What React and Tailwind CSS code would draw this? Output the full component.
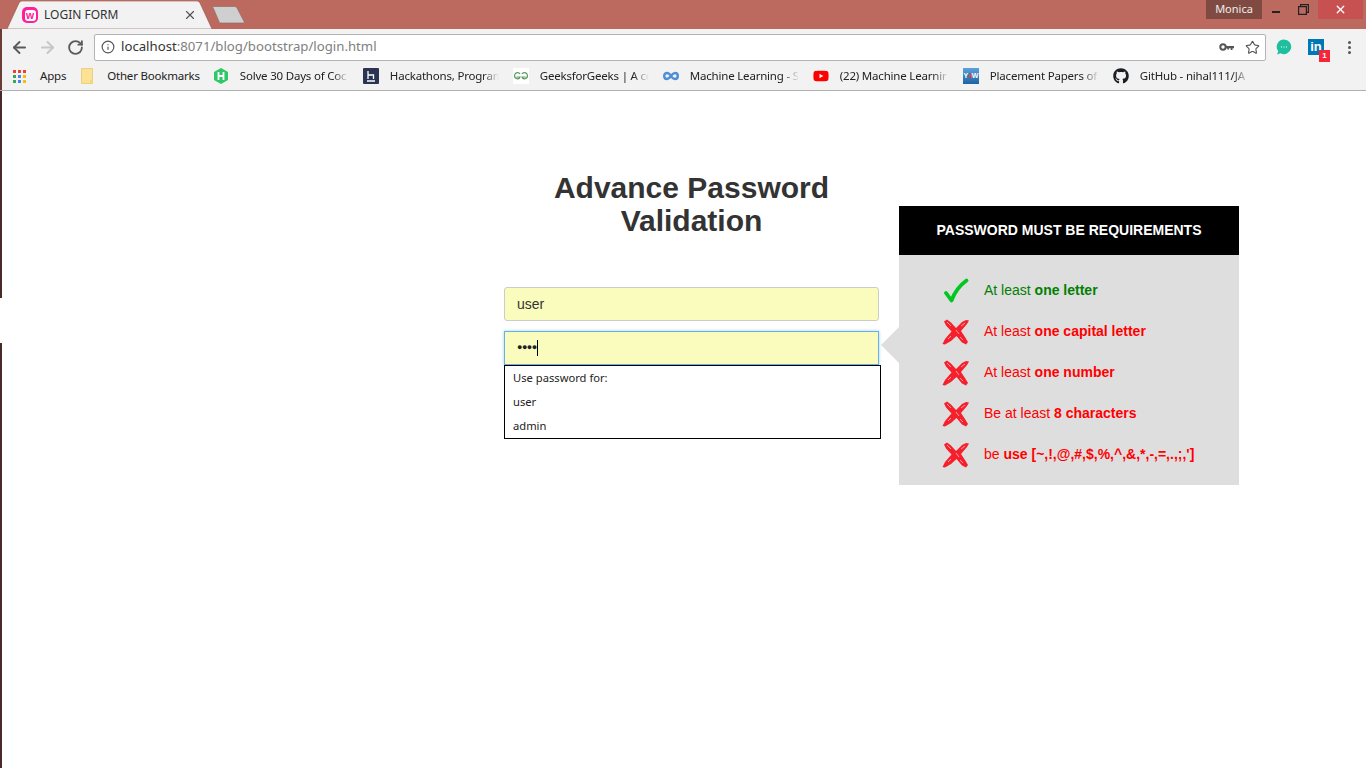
import { ArrowLeft, ArrowRight, RotateCw, Info, Star, X } from "lucide-react";
import { FaGithub, FaYoutube } from "react-icons/fa";

const uiFont = "font-['Noto_Sans',sans-serif]";

function AppsIcon() {
  const colors = ["#ea4335", "#ea4335", "#ea4335", "#34a853", "#4285f4", "#fbbc05", "#34a853", "#4285f4", "#fbbc05"];
  return (
    <div className="grid grid-cols-3 gap-[2px] w-[13px] h-[13px] shrink-0">
      {colors.map((c, i) => (
        <span key={i} className="w-[3px] h-[3px]" style={{ backgroundColor: c }} />
      ))}
    </div>
  );
}

function FolderIcon() {
  return (
    <svg width="12" height="16" viewBox="0 0 12 16" className="shrink-0">
      <path d="M.5.5h11v15H.5z" fill="#fde293" stroke="#e9cf86" />
      <path d="M9 12h3v3.500H9z" fill="#f4d675" />
    </svg>
  );
}

function HackerRankIcon() {
  return (
    <svg width="16" height="16" viewBox="0 0 16 16">
      <path d="M8 0l7 4v8l-7 4-7-4V4z" fill="#2ec866" />
      <path d="M5.500 4v8M10.500 4v8M5.500 8h5" stroke="#fff" strokeWidth="1.800" />
    </svg>
  );
}

function HackerEarthIcon() {
  return (
    <svg width="16" height="16" viewBox="0 0 16 16">
      <rect width="16" height="16" rx="1" fill="#2c3454" />
      <path d="M5 3v8M5 7h5.500v4M4 13h8" stroke="#fff" strokeWidth="1.300" fill="none" />
    </svg>
  );
}

function GfgIcon() {
  return (
    <div className="w-4 h-4 bg-white flex items-center justify-center shrink-0">
      <svg width="16" height="10" viewBox="0 0 16 10" fill="none" stroke="#5a9a5e" strokeWidth="1.200">
        <path d="M7 3C6 1 2 1 1.500 4.500 1.500 8 6 9 7 6H3.500" />
        <path d="M9 3c1-2 5-2 5.500 1.500C14.500 8 10 9 9 6h3.500" />
      </svg>
    </div>
  );
}

function InfinityIcon() {
  return (
    <svg width="16" height="16" viewBox="0 0 16 16" fill="none" stroke="#4a8fd8" strokeWidth="2.400">
      <path d="M8 8C6.500 5.500 5.500 5 4 5 2.300 5 1.200 6.300 1.200 8S2.300 11 4 11C6 11 7 9.500 8 8 9 6.500 10 5 12 5 13.700 5 14.800 6.300 14.800 8S13.700 11 12 11C10.500 11 9.500 10.500 8 8Z" />
    </svg>
  );
}

function YwIcon() {
  return (
    <div className="w-4 h-4 bg-gradient-to-b from-[#5aa2dc] to-[#1f63a3] flex items-center justify-center shrink-0 font-['Liberation_Sans',sans-serif] text-[7px] font-bold text-white">
      Y<span className="text-[#e8403a]">4</span>W
    </div>
  );
}

const bookmarks = [
  { icon: <HackerRankIcon />, label: "Solve 30 Days of Coc" },
  { icon: <HackerEarthIcon />, label: "Hackathons, Program" },
  { icon: <GfgIcon />, label: "GeeksforGeeks | A cc" },
  { icon: <InfinityIcon />, label: "Machine Learning - S" },
  { icon: <FaYoutube size={16} color="#f00" />, label: "(22) Machine Learnir" },
  { icon: <YwIcon />, label: "Placement Papers of" },
  { icon: <FaGithub size={16} color="#1b1f23" />, label: "GitHub - nihal111/JA" },
];

function Bookmark({ icon, label }) {
  return (
    <div className="flex items-center w-[150px] shrink-0">
      <div className="w-4 flex justify-center shrink-0">{icon}</div>
      <span className="ml-[11px] w-[109px] whitespace-nowrap [mask-image:linear-gradient(to_right,black_85%,transparent)]">
        {label}
      </span>
    </div>
  );
}

function TabBar() {
  return (
    <div className="h-[29px] bg-[#bc6a5f] flex relative shrink-0">
      <div className="relative w-[205px] ml-[7px] h-[28px] mt-[1px] shrink-0">
        <svg width="205" height="28" viewBox="0 0 205 28" className="absolute inset-0">
          <path d="M0 28L12 2Q13 0 15 0H190Q192 0 193 2L205 28Z" fill="#f2f2f2" stroke="#8f534a" strokeWidth=".6" />
        </svg>
        <div className={`relative flex items-center h-full pl-[15px] pr-[15px] text-xs text-[#333] ${uiFont}`}>
          <div className="w-4 h-4 rounded-[5px] bg-[#ff1f9c] flex items-center justify-center shrink-0">
            <div className="w-[11px] h-[11px] rounded-[3px] bg-white text-[#ff1f9c] text-[10px] leading-[10px] font-bold text-center">w</div>
          </div>
          <span className="ml-[6px] flex-1">LOGIN FORM</span>
          <X size={14} strokeWidth={2} className="text-[#555]" />
        </div>
      </div>
      <svg width="36" height="18" viewBox="0 0 36 18" className="mt-[6px] ml-[-1px]">
        <path d="M2 1.500C1 1 1.500 .5 3 .5H23C25 .5 25.500 1 26 2L33 15.500C33.500 16.500 33 17 32 17H10C9 17 8.500 16.500 8 15.500Z" fill="#cfcfcf" stroke="#8f6f69" strokeWidth=".7" />
      </svg>

      <div className="ml-auto flex items-start">
        <div className={`h-[19px] w-[56px] bg-[#7f4a42] text-white/90 text-[11px] leading-[18px] text-center ${uiFont}`}>Monica</div>
        <div className="w-[27px] h-[19px] ml-[1px] flex items-center justify-center">
          <span className="w-2 h-[2px] mt-[5px] ml-[-1px] bg-[#222]" />
        </div>
        <div className="w-[27px] h-[19px] flex items-center justify-center">
          <svg width="11" height="11" viewBox="0 0 11 11" fill="none" stroke="#222" strokeWidth="1.200">
            <path d="M.6 2.600h7.800v7.800H.6zM2.600 2.600V.6h7.800v7.800H8.400" />
          </svg>
        </div>
        <div className="w-[45px] h-[19px] ml-[1px] mr-[3px] bg-[#c75050] flex items-center justify-center">
          <X size={13} strokeWidth={2.500} color="#fff" />
        </div>
      </div>
    </div>
  );
}

function Toolbar() {
  return (
    <div className="h-[33px] pt-[3px] bg-[#f2f2f2] shadow-[inset_2px_0_0_#6b3b35] flex items-center shrink-0">
      <ArrowLeft size={19} strokeWidth={2.400} className="ml-[10px] text-[#5a5a5a]" />
      <ArrowRight size={19} strokeWidth={2.400} className="ml-[9px] text-[#c6c6c6]" />
      <RotateCw size={17} strokeWidth={2.600} className="ml-[10px] text-[#5a5a5a]" />
      <div className="ml-[10px] w-[1172px] h-[27px] bg-white border border-[#b4b4b4] rounded-[2px] flex items-center">
        <Info size={14} strokeWidth={2} className="ml-[6px] text-[#555]" />
        <span className={`ml-[6px] text-[13.200px] text-[#333] ${uiFont}`}>
          localhost<span className="text-[#808080]">:8071/blog/bootstrap/login.html</span>
        </span>
        <svg width="15" height="8" viewBox="0 0 15 8" className="ml-auto">
          <circle cx="4" cy="4" r="2.700" fill="none" stroke="#555" strokeWidth="2" />
          <path d="M6 3h9v2.200h-1.500V7h-1.800V5.200H10V6.500H8.300V5.200H6z" fill="#555" />
        </svg>
        <Star size={15} strokeWidth={1.800} className="ml-[11px] mr-[5px] text-[#555]" />
      </div>
      <svg width="16" height="16" viewBox="0 0 16 16" className="ml-[10px]">
        <path d="M8 .5a7.300 7.300 0 1 1-3.400 13.800L1 15.500l1.300-3.200A7.300 7.300 0 0 1 8 .5z" fill="#1dbf9f" />
        <path d="M5 8h1M7.500 8h1M10 8h1" stroke="#fff" strokeWidth="1.200" />
      </svg>
      <div className="relative ml-[16px] w-4 h-4 bg-[#0077b5] text-white text-[13px] leading-[16px] font-bold text-center font-['Liberation_Sans',sans-serif]">
        in
        <span className="absolute left-[11px] top-[11px] w-[11px] h-[12px] bg-[#f6263a] text-white text-[8px] leading-[12px]">1</span>
      </div>
      <div className="ml-[24px] flex flex-col gap-[2px]">
        <span className="w-[3px] h-[3px] rounded-full bg-[#555]" />
        <span className="w-[3px] h-[3px] rounded-full bg-[#555]" />
        <span className="w-[3px] h-[3px] rounded-full bg-[#555]" />
      </div>
    </div>
  );
}

function BookmarksBar() {
  return (
    <div className={`h-[29px] bg-[#f2f2f2] border-b border-[#b0b0b0] shadow-[inset_2px_0_0_#6b3b35] flex items-center pl-[13px] text-[11.500px] tracking-[-0.2px] text-[#222] shrink-0 ${uiFont}`}>
      <AppsIcon />
      <span className="ml-[14px]">Apps</span>
      <div className="ml-[15px]"><FolderIcon /></div>
      <span className="ml-[14px]">Other Bookmarks</span>
      <div className="ml-[13px] flex">
        {bookmarks.map((b) => (
          <Bookmark key={b.label} icon={b.icon} label={b.label} />
        ))}
      </div>
    </div>
  );
}

function CheckMark() {
  return (
    <svg width="26" height="26" viewBox="0 0 26 26" fill="none">
      <path d="M3 15L8.500 22.500C11.500 14.500 16.500 7.500 23.500 2.500" stroke="#00c81e" strokeWidth="3.800" strokeLinecap="round" strokeLinejoin="round" />
    </svg>
  );
}

function CrossMark() {
  return (
    <svg width="28" height="26" viewBox="0 0 28 26">
      <path d="M2 2.500L5 .5 9 3.500 14 9 20 3 24 1 27 1.500 25 5 19 12 23 18 26 23 24 25.500 20 23.500 14.500 17 9 22 3 25.500 .5 25 3 20 9.500 12.500 4 6.500Z" fill="#f5202c" />
      <path d="M5 3l4 4M14 11l3 4M23 4l-4 3M9 17l-3 3M18 18l3 3" stroke="#ff9ea4" strokeWidth="1" />
    </svg>
  );
}

function Requirement({ ok, lead, strong }) {
  return (
    <div className={`h-[41px] flex items-center ${ok ? "text-[#008000]" : "text-[#ff0000]"}`}>
      <div className="w-[30px] ml-[42px] flex justify-center shrink-0">{ok ? <CheckMark /> : <CrossMark />}</div>
      <span className="ml-[13px]">
        {lead} <b>{strong}</b>
      </span>
    </div>
  );
}

function LoginForm() {
  return (
    <div className="w-[375px] shrink-0">
      <h1 className="text-[30px] leading-[33px] font-bold text-[#333] text-center mb-[50px]">
        Advance Password
        <br />
        Validation
      </h1>
      <div className="h-[34px] bg-[#fafcbd] border border-[#ccc] rounded-[3px] flex items-center pl-[12px] text-[14px] text-[#333] font-['Liberation_Sans',sans-serif] mb-[10px]">
        user
      </div>
      <div className="relative h-[34px] bg-[#fafcbd] border border-[#66afe9] shadow-[0_0_3px_rgba(102,175,233,0.6)] flex items-center pl-[12px]">
        <span className="text-[#222] text-[9px] tracking-[-0.5px]">●●●●</span>
        <span className="w-[1px] h-[16px] bg-black" />
        <div className={`absolute left-[-1px] top-[33px] w-[377px] h-[74px] bg-white border border-black text-[11.200px] leading-[24px] text-[#222] ${uiFont}`}>
          <div className="pl-[8px]">Use password for:</div>
          <div className="pl-[8px]">user</div>
          <div className="pl-[8px]">admin</div>
        </div>
      </div>
    </div>
  );
}

function RequirementsPanel() {
  return (
    <div className="relative w-[340px] ml-[20px] mt-[35px] h-[279px] bg-[#dedede] text-[14px] shrink-0">
      <div className="absolute left-[-18px] top-[121px] border-y-[18px] border-y-transparent border-r-[18px] border-r-[#dedede]" />
      <div className="h-[49px] bg-black text-white text-[14px] font-bold flex items-center justify-center">
        PASSWORD MUST BE REQUIREMENTS
      </div>
      <div className="pt-[15px]">
        <Requirement ok lead="At least" strong="one letter" />
        <Requirement lead="At least" strong="one capital letter" />
        <Requirement lead="At least" strong="one number" />
        <Requirement lead="Be at least" strong="8 characters" />
        <Requirement lead="be" strong="use [~,!,@,#,$,%,^,&,*,-,=,.,;,']" />
      </div>
    </div>
  );
}

export default function App() {
  return (
    <div className="h-[768px] overflow-hidden flex flex-col bg-white font-['Liberation_Sans',sans-serif]">
      <TabBar />
      <Toolbar />
      <BookmarksBar />
      <div className="flex-1 flex">
        <div className="w-[2px] flex flex-col shrink-0">
          <div className="h-[207px] bg-[#4a2a28]" />
          <div className="h-[45px] bg-white" />
          <div className="flex-1 bg-[#4a2a28]" />
        </div>
        <div className="pl-[502px] pt-[80px] flex items-start">
          <LoginForm />
          <RequirementsPanel />
        </div>
      </div>
    </div>
  );
}
